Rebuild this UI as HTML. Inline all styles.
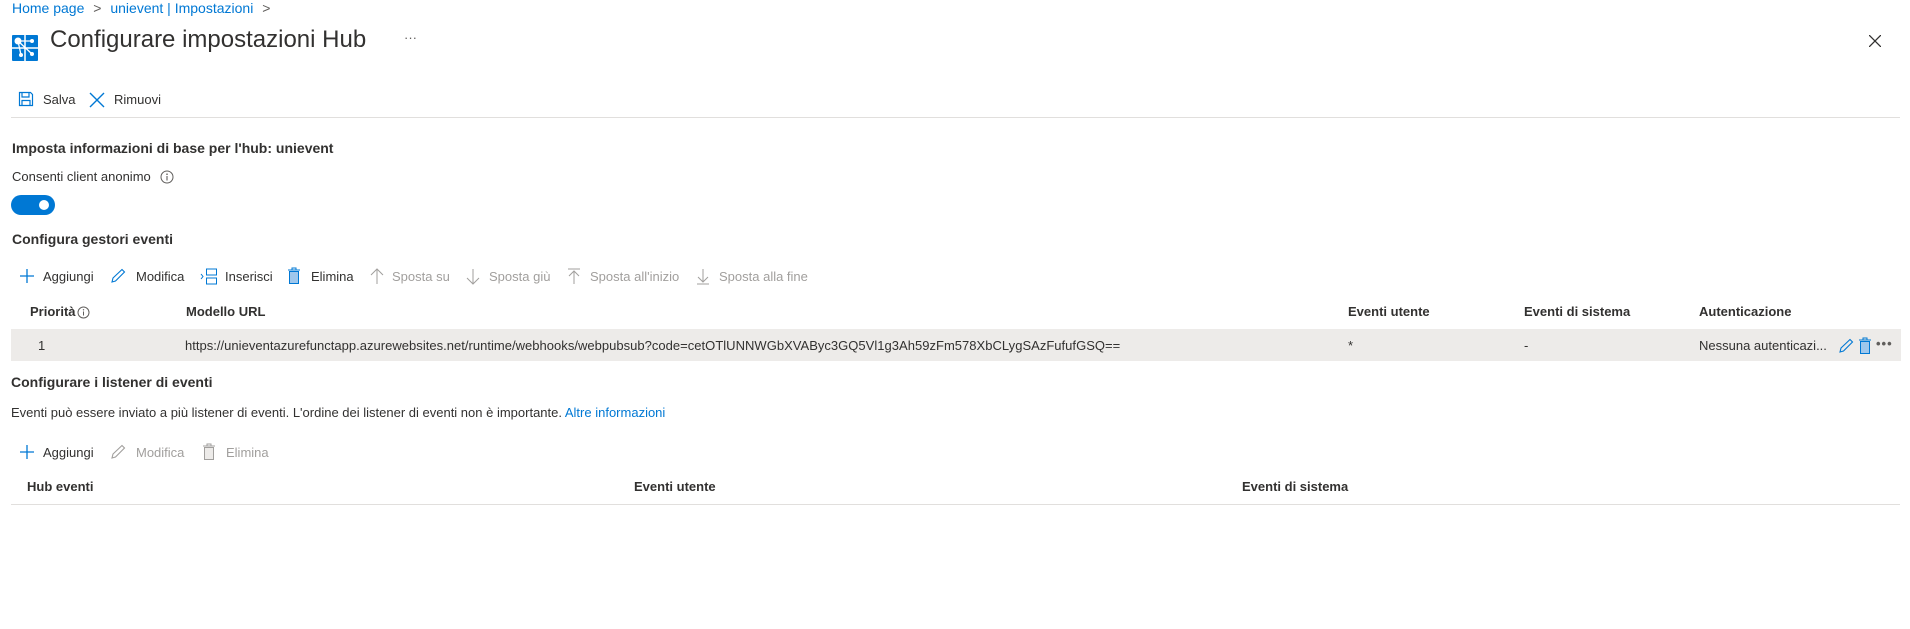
<!DOCTYPE html>
<html><head><meta charset="utf-8"><style>
*{margin:0;padding:0;box-sizing:border-box}
body{width:1910px;height:629px;background:#fff;font-family:"Liberation Sans",sans-serif;font-size:13px;color:#323130;position:relative;overflow:hidden}
.a{position:absolute;white-space:nowrap;line-height:18px}
.c{transform:translateY(-9px)}
.b{font-weight:bold;font-size:14px}
.link{color:#0078d4}
.dis{color:#a19f9d}
svg{position:absolute}
</style></head><body>
<div class="a c link" style="left:12px;top:8px;font-size:14px">Home page <span style="color:#605e5c;margin:0 5px">&gt;</span> unievent | Impostazioni <span style="color:#605e5c;margin-left:5px">&gt;</span></div>

<svg style="left:12px;top:35px" width="26" height="26" viewBox="0 0 26 26"><rect width="26" height="26" rx="1" fill="#0078d4"/><path d="M13 0V26M0 13H26" stroke="#fff" stroke-width="1.5"/><path d="M6 6L20 6M6 6L9 20M6 6L20 19" stroke="#fff" stroke-width="1.3"/><circle cx="6" cy="6" r="3.5" fill="#fff"/><circle cx="20" cy="6" r="2" fill="#fff"/><circle cx="9" cy="20" r="2" fill="#fff"/><circle cx="20" cy="19" r="2" fill="#fff"/></svg>
<div class="a" style="left:50px;top:26px;font-size:24px;line-height:28px">Configurare impostazioni Hub</div>
<div class="a c" style="left:404px;top:38px;color:#605e5c">···</div>
<svg style="left:1869px;top:35px" width="12" height="12"><path d="M0 0L12 12M12 0L0 12" stroke="#323130" stroke-width="1.3"/></svg>

<svg style="left:18px;top:91px" width="16" height="16" viewBox="0 0 16 16"><path d="M1.5 1.5H12.5L14.5 3.5V14.5H1.5Z M4 1.5V6H11V1.5 M4 14.5V9.5H12V14.5" fill="none" stroke="#0078d4" stroke-width="1.2"/></svg>
<div class="a c" style="left:43px;top:100px">Salva</div>
<svg style="left:89px;top:92px" width="16" height="16"><path d="M1 1L15 15M15 1L1 15" stroke="#0078d4" stroke-width="1.4"/></svg>
<div class="a c" style="left:114px;top:100px">Rimuovi</div>
<div class="a" style="left:11px;top:117px;width:1889px;height:1px;background:#e1dfdd"></div>

<div class="a c b" style="left:12px;top:148px">Imposta informazioni di base per l'hub: unievent</div>
<div class="a c" style="left:12px;top:177px">Consenti client anonimo</div>
<svg style="left:160px;top:170px" width="14" height="14"><circle cx="7" cy="7" r="6" fill="none" stroke="#605e5c"/><path d="M7 6V10.5" stroke="#605e5c" stroke-width="1.1"/><circle cx="7" cy="4.2" r=".8" fill="#605e5c"/></svg>
<div class="a" style="left:11px;top:195px;width:44px;height:20px;border-radius:10px;background:#0078d4"></div>
<div class="a" style="left:39px;top:200px;width:10px;height:10px;border-radius:5px;background:#fff"></div>

<div class="a c b" style="left:12px;top:239px">Configura gestori eventi</div>
<svg style="left:19px;top:268px" width="16" height="16"><path d="M8 1V15M1 8H15" stroke="#0078d4" stroke-width="1.3"/></svg>
<div class="a c" style="left:43px;top:277px">Aggiungi</div>
<svg style="left:110px;top:268px" width="16" height="16"><path d="M2 14L3 10L12 1.5L14.5 4L5.5 13Z" fill="none" stroke="#0078d4" stroke-width="1.1"/></svg>
<div class="a c" style="left:136px;top:277px">Modifica</div>
<svg style="left:200px;top:268px" width="18" height="17"><path d="M1 6L3 8.5L1 11" fill="none" stroke="#0078d4"/><rect x="6.5" y="1" width="10" height="6" fill="none" stroke="#0078d4"/><rect x="6.5" y="10" width="10" height="6" fill="none" stroke="#0078d4"/></svg>
<div class="a c" style="left:225px;top:277px">Inserisci</div>
<svg style="left:287px;top:267px" width="14" height="18"><path d="M1 3H13M5 3V1H9V3" fill="none" stroke="#0078d4"/><rect x="2.5" y="4.5" width="9" height="12" fill="#9fc7ec" stroke="#0078d4"/></svg>
<div class="a c" style="left:311px;top:277px">Elimina</div>
<svg style="left:370px;top:268px" width="14" height="17"><path d="M7 16V1M1 7L7 1L13 7" fill="none" stroke="#a19f9d"/></svg>
<div class="a c dis" style="left:392px;top:277px">Sposta su</div>
<svg style="left:466px;top:268px" width="14" height="17"><path d="M7 1V16M1 10L7 16L13 10" fill="none" stroke="#a19f9d"/></svg>
<div class="a c dis" style="left:489px;top:277px">Sposta giù</div>
<svg style="left:567px;top:268px" width="14" height="17"><path d="M1 1H13M7 16V3M2 8L7 3L12 8" fill="none" stroke="#a19f9d"/></svg>
<div class="a c dis" style="left:590px;top:277px">Sposta all'inizio</div>
<svg style="left:696px;top:268px" width="14" height="17"><path d="M1 16H13M7 1V14M2 9L7 14L12 9" fill="none" stroke="#a19f9d"/></svg>
<div class="a c dis" style="left:719px;top:277px">Sposta alla fine</div>

<div class="a c b" style="left:30px;top:312px;font-size:13px">Priorità</div>
<svg style="left:77px;top:306px" width="13" height="13"><circle cx="6.5" cy="6.5" r="5.5" fill="none" stroke="#605e5c"/><path d="M6.5 5.5V9.5" stroke="#605e5c"/><circle cx="6.5" cy="3.8" r=".7" fill="#605e5c"/></svg>
<div class="a c b" style="left:186px;top:312px;font-size:13px">Modello URL</div>
<div class="a c b" style="left:1348px;top:312px;font-size:13px">Eventi utente</div>
<div class="a c b" style="left:1524px;top:312px;font-size:13px">Eventi di sistema</div>
<div class="a c b" style="left:1699px;top:312px;font-size:13px">Autenticazione</div>
<div class="a" style="left:11px;top:329px;width:1890px;height:32px;background:#edebe9"></div>
<div class="a c" style="left:38px;top:346px">1</div>
<div class="a c" style="left:185px;top:346px;letter-spacing:0.02px">https://unieventazurefunctapp.azurewebsites.net/runtime/webhooks/webpubsub?code=cetOTlUNNWGbXVAByc3GQ5Vl1g3Ah59zFm578XbCLygSAzFufufGSQ==</div>
<div class="a c" style="left:1348px;top:346px">*</div>
<div class="a c" style="left:1524px;top:346px">-</div>
<div class="a c" style="left:1699px;top:346px">Nessuna autenticazi...</div>
<svg style="left:1838px;top:338px" width="16" height="16"><path d="M2 14L3 10L12 1.5L14.5 4L5.5 13Z" fill="none" stroke="#0078d4" stroke-width="1.1"/></svg>
<svg style="left:1858px;top:337px" width="14" height="18"><path d="M1 3H13M5 3V1H9V3" fill="none" stroke="#0078d4"/><rect x="2.5" y="4.5" width="9" height="12" fill="#9fc7ec" stroke="#0078d4"/></svg>
<div class="a c" style="left:1876px;top:344px;color:#605e5c;font-weight:bold;letter-spacing:1px">•••</div>

<div class="a c b" style="left:11px;top:382px">Configurare i listener di eventi</div>
<div class="a c" style="left:11px;top:413px">Eventi può essere inviato a più listener di eventi. L'ordine dei listener di eventi non è importante. <span class="link">Altre informazioni</span></div>
<svg style="left:19px;top:444px" width="16" height="16"><path d="M8 1V15M1 8H15" stroke="#0078d4" stroke-width="1.3"/></svg>
<div class="a c" style="left:43px;top:453px">Aggiungi</div>
<svg style="left:110px;top:444px" width="16" height="16"><path d="M2 14L3 10L12 1.5L14.5 4L5.5 13Z" fill="none" stroke="#a19f9d" stroke-width="1.1"/></svg>
<div class="a c dis" style="left:136px;top:453px">Modifica</div>
<svg style="left:202px;top:443px" width="14" height="18"><path d="M1 3H13M5 3V1H9V3" fill="none" stroke="#a19f9d"/><rect x="2.5" y="4.5" width="9" height="12" fill="#edebe9" stroke="#a19f9d"/></svg>
<div class="a c dis" style="left:226px;top:453px">Elimina</div>

<div class="a c b" style="left:27px;top:487px;font-size:13px">Hub eventi</div>
<div class="a c b" style="left:634px;top:487px;font-size:13px">Eventi utente</div>
<div class="a c b" style="left:1242px;top:487px;font-size:13px">Eventi di sistema</div>
<div class="a" style="left:11px;top:504px;width:1889px;height:1px;background:#e1dfdd"></div>
</body></html>
